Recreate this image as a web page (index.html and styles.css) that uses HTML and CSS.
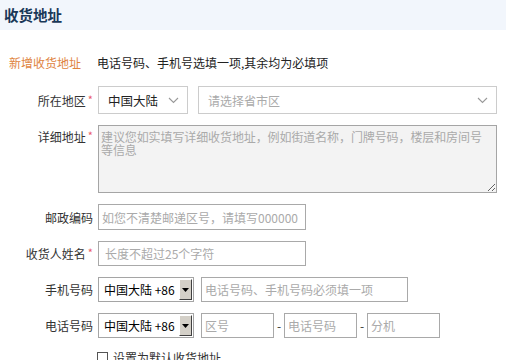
FILE: index.html
```html
<!DOCTYPE html>
<html lang="zh-CN">
<head>
<meta charset="utf-8">
<title>收货地址</title>
<link rel="stylesheet" href="styles.css">
</head>
<body>
<header class="title-bar"><h1 class="title">收货地址</h1></header>
<div class="intro">
  <span class="intro-title">新增收货地址</span>
  <span class="intro-note">电话号码、手机号选填一项,其余均为必填项</span>
</div>
<form class="addr-form">
  <div class="row">
    <label class="lbl">所在地区<i class="req">*</i></label>
    <div class="field">
      <div class="sel sel-country"><span>中国大陆</span>
        <svg class="chev" width="11" height="7" viewBox="0 0 11 7"><path d="M1 1 L5.5 5.5 L10 1" fill="none" stroke="#999" stroke-width="1.1"/></svg>
      </div>
      <div class="sel sel-region"><span class="ph">请选择省市区</span>
        <svg class="chev" width="11" height="7" viewBox="0 0 11 7"><path d="M1 1 L5.5 5.5 L10 1" fill="none" stroke="#999" stroke-width="1.1"/></svg>
      </div>
    </div>
  </div>
  <div class="row row-top">
    <label class="lbl lbl-top">详细地址<i class="req">*</i></label>
    <div class="field">
      <textarea class="detail" placeholder="建议您如实填写详细收货地址，例如街道名称，门牌号码，楼层和房间号&#10;等信息"></textarea>
    </div>
  </div>
  <div class="row">
    <label class="lbl">邮政编码</label>
    <div class="field"><input class="inp inp-post" placeholder="如您不清楚邮递区号，请填写000000"></div>
  </div>
  <div class="row">
    <label class="lbl">收货人姓名<i class="req">*</i></label>
    <div class="field"><input class="inp inp-name" placeholder="长度不超过25个字符"></div>
  </div>
  <div class="row">
    <label class="lbl">手机号码</label>
    <div class="field">
      <div class="oldsel"><span>中国大陆 +86</span><span class="oldbtn"><svg width="7" height="4" viewBox="0 0 7 4"><path d="M0 0 H7 L3.5 4 Z" fill="#000"/></svg></span></div>
      <input class="inp inp-mobile" placeholder="电话号码、手机号码必须填一项">
    </div>
  </div>
  <div class="row">
    <label class="lbl">电话号码</label>
    <div class="field">
      <div class="oldsel"><span>中国大陆 +86</span><span class="oldbtn"><svg width="7" height="4" viewBox="0 0 7 4"><path d="M0 0 H7 L3.5 4 Z" fill="#000"/></svg></span></div>
      <input class="inp inp-area" placeholder="区号">
      <span class="dash">-</span>
      <input class="inp inp-tel" placeholder="电话号码">
      <span class="dash dash2">-</span>
      <input class="inp inp-ext" placeholder="分机">
    </div>
  </div>
  <div class="row">
    <span class="lbl"></span>
    <label class="field chk"><span class="box"></span>设置为默认收货地址</label>
  </div>
</form>
</body>
</html>
```
FILE: styles.css
```css
* { box-sizing: border-box; }
body {
  margin: 0;
  background: #fff;
  font-family: "Noto Sans CJK SC", "Liberation Sans", sans-serif;
  font-size: 12px;
  color: #333;
  overflow: hidden;
}
.title-bar {
  height: 30px;
  background: #f2f6fc;
  display: flex;
  align-items: center;
  padding-left: 4px;
}
.title {
  margin: 0;
  font-size: 14.5px;
  font-weight: bold;
  color: #1a3858;
  line-height: 1;
}
.intro {
  margin-top: 22px;
  height: 20px;
  display: flex;
  align-items: center;
}
.intro-title {
  margin-left: 9px;
  color: #e0843f;
}
.intro-note {
  margin-left: 16px;
  color: #222;
}
.addr-form {
  margin-top: 14px;
  display: flex;
  flex-direction: column;
  gap: 11px;
}
.row {
  display: grid;
  grid-template-columns: 93px 1fr;
  column-gap: 5px;
  align-items: center;
}
.row-top { align-items: start; }
.lbl {
  text-align: right;
  color: #333;
  white-space: nowrap;
}
.lbl-top { padding-top: 3px; }
.req {
  font-style: normal;
  color: #ea5a6a;
  font-size: 11px;
  margin-left: 2px;
  position: relative;
  top: -2px;
}
.field {
  display: flex;
  align-items: center;
}
.sel {
  height: 28px;
  border: 1px solid #ccc;
  display: flex;
  align-items: center;
  justify-content: space-between;
  background: #fff;
}
.sel-country {
  width: 90px;
  padding: 0 8px 0 9px;
  color: #222;
  font-size: 12.5px;
}
.sel-region {
  width: 299px;
  margin-left: 10px;
  padding: 0 8px 0 9px;
}
.ph { color: #aaa; }
.detail {
  width: 399px;
  height: 68px;
  margin: 0;
  border: 1px solid #a5a5a5;
  background: #f3f3f3;
  font-family: "Noto Sans CJK SC", sans-serif;
  font-size: 12px;
  letter-spacing: -0.1px;
  line-height: 13px;
  padding: 4px 2px;
  color: #333;
  display: block;
}
.detail::placeholder, .inp::placeholder { color: #aaa; opacity: 1; }
.inp {
  height: 26px;
  margin: 0;
  border: 1px solid #a9a9a9;
  font-family: "Noto Sans CJK SC", sans-serif;
  font-size: 12px;
  padding: 0 3px;
  background: #fff;
  color: #333;
}
.inp-post { width: 208px; }
.inp-name { width: 208px; height: 25px; padding-left: 6px; }
.inp-mobile { width: 207px; height: 25px; margin-left: 7px; }
.inp-area { width: 73px; height: 25px; margin-left: 7px; }
.inp-tel { width: 73px; height: 25px; }
.inp-ext { width: 73px; height: 25px; }
.dash { width: 10px; text-align: center; color: #333; }
.dash2 { width: 10px; }
.oldsel {
  width: 96px;
  height: 25px;
  border: 1px solid #a5a5a5;
  display: flex;
  align-items: center;
  justify-content: space-between;
  padding: 1px 1px 1px 5px;
  color: #000;
  font-size: 12px;
  background: #fff;
}
.oldbtn {
  width: 13px;
  height: 21px;
  background: #d4d0c8;
  border: 1px solid;
  border-color: #fff #404040 #404040 #fff;
  display: flex;
  align-items: center;
  justify-content: center;
}
.chk {
  margin-top: 0;
  gap: 5px;
  color: #333;
  margin-left: -1px;
}
.box {
  width: 11px;
  height: 11px;
  border: 1px solid #555;
  background: #fff;
  display: inline-block;
}
```
